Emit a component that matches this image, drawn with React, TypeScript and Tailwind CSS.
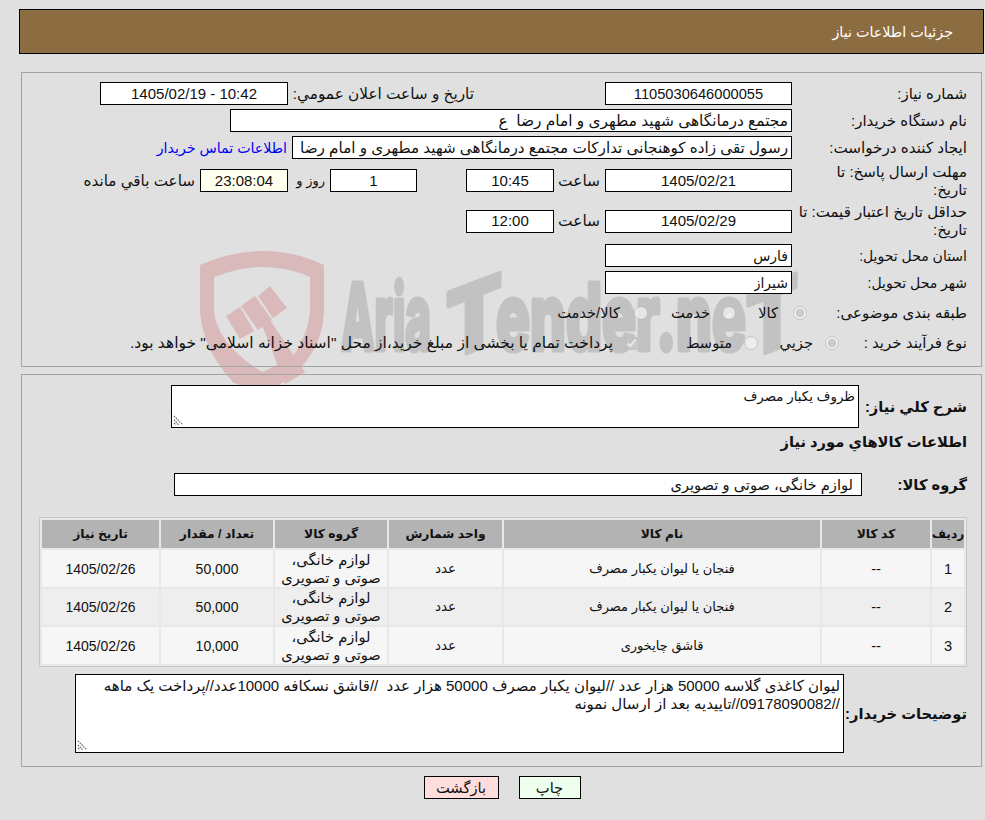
import React from 'react';

const items = [
  { id: '1', name: 'فنجان يا ليوان يکبار مصرف', qty: '50,000', bg: 'bg-[#f6f6f6]', h: 'h-[37px]' },
  { id: '2', name: 'فنجان يا ليوان يکبار مصرف', qty: '50,000', bg: 'bg-[#eeeeee]', h: 'h-[36px]' },
  { id: '3', name: 'قاشق چايخوری', qty: '10,000', bg: 'bg-[#f6f6f6]', h: 'h-[37px]' },
];

function Box({ className = '', children }: { className?: string; children?: React.ReactNode }) {
  return (
    <div className={`flex h-[23px] shrink-0 items-center border border-black bg-white px-[3px] ${className}`}>
      <span className="truncate">{children}</span>
    </div>
  );
}

function Grip() {
  return (
    <svg className="absolute bottom-[1px] left-[1px]" width="11" height="11" viewBox="0 0 11 11">
      <path d="M1 1 L10 10 M1 5 L6 10 M1 8 L3 10" stroke="#666" strokeWidth="1.2" strokeDasharray="1.5 1" fill="none" />
    </svg>
  );
}

function Watermark() {
  return (
    <svg dir="ltr" className="absolute left-[190px] top-[240px]" width="630" height="190" viewBox="190 240 630 190">
      <g fill="#d9b9b9">
        <path
          fillRule="evenodd"
          d="M200 265 Q232 251 262 251 Q295 251 324 265 L324 312 Q322 350 293 375 L275 388 L233 382 Q203 350 200 312 Z M214 277 Q240 267 262 267 Q288 267 310 277 L310 312 Q308 335 292 358 L262 372 Q218 345 214 312 Z"
        />
        <path d="M226 316 L240 307 L254 331 L240 339 Z" />
        <path d="M241 306 L255 296 L272 320 L258 330 Z" />
        <path d="M258 296 L270 286 L287 308 L273 318 Z" />
        <path d="M262 325 L270 320 L305 372 L285 384 Z" />
        <path d="M248 362 L232 382 L258 392 Z" />
      </g>
      <g
        fill="#c2c2c2"
        stroke="#c2c2c2"
        strokeWidth="5"
        strokeLinejoin="round"
        fontFamily="Inter, sans-serif"
        fontWeight="800"
        style={{ direction: 'ltr' }}
      >
        <text x="341" y="350" fontSize="92" textLength="90" lengthAdjust="spacingAndGlyphs">Aria</text>
        <text x="446" y="350" fontSize="92" textLength="56" lengthAdjust="spacingAndGlyphs" transform="translate(474 350) skewY(-21) translate(-474 -350)">T</text>
        <text x="496" y="350" fontSize="92" textLength="250" lengthAdjust="spacingAndGlyphs">ender.ne</text>
        <text x="746" y="350" fontSize="92" textLength="52" lengthAdjust="spacingAndGlyphs" transform="translate(772 350) skewY(-21) translate(-772 -350)">T</text>
      </g>
    </svg>
  );
}

export default function App() {
  return (
    <div
      dir="rtl"
      className="relative h-[820px] overflow-hidden bg-[#e0e0e0] text-[14.67px] leading-[18px] text-[#111] [font-family:'Liberation_Sans','DejaVu_Sans',sans-serif]"
    >
      <Watermark />

      <div className="relative flex flex-col">
        {/* header */}
        <div className="ml-[19px] mr-px mt-[9px] flex h-[45px] items-center border border-black bg-[#8c6d42] pr-[30px] text-[14.3px] text-white">
          جزئيات اطلاعات نياز
        </div>

        {/* top panel */}
        <div className="ml-[21px] mr-[3px] mt-[18px] flex flex-col gap-1 border border-[#a3a3a3] pb-[12px] pr-[14px] pt-[9px]">
          <div className="flex h-[23px] items-center">
            <div className="w-[175px] shrink-0 text-[15px]">شماره نياز:</div>
            <Box className="w-[187px] justify-center">1105030646000055</Box>
            <div className="w-[131px] shrink-0" />
            <div className="w-[186px] shrink-0 text-[15.3px]">تاريخ و ساعت اعلان عمومي:</div>
            <Box className="w-[188px] justify-center text-[15px]">10:42 - 1405/02/19</Box>
          </div>
          <div className="flex h-[23px] items-center">
            <div className="w-[175px] shrink-0 text-[15px]">نام دستگاه خريدار:</div>
            <Box className="w-[562px] text-[15.4px]">مجتمع درمانگاهی شهيد مطهری و امام رضا&nbsp; ع</Box>
          </div>
          <div className="flex h-[23px] items-center">
            <div className="w-[175px] shrink-0 text-[15.2px]">ايجاد کننده درخواست:</div>
            <Box className="w-[500px] text-[15.2px]">رسول تقی زاده کوهنجانی تدارکات مجتمع درمانگاهی شهيد مطهری و امام رضا</Box>
            <a className="mr-[5px] text-[14.2px] text-[#0000ee]">اطلاعات تماس خريدار</a>
          </div>
          <div className="flex h-[35px] items-center">
            <div className="w-[175px] shrink-0 text-[15px]">
              مهلت ارسال پاسخ: تا
              <br />
              تاريخ:
            </div>
            <Box className="w-[187px] justify-center text-[15px]">1405/02/21</Box>
            <div className="w-[51px] shrink-0 pr-[5px] text-[15.4px]">ساعت</div>
            <Box className="w-[88px] justify-center text-[15px]">10:45</Box>
            <div className="w-[49px] shrink-0" />
            <Box className="w-[87px] justify-center text-[15px]">1</Box>
            <div className="w-[42px] shrink-0 pr-[5px] text-[13px]">روز و</div>
            <Box className="w-[88px] justify-center !bg-[#ffffee] text-[15px]">23:08:04</Box>
            <div className="shrink-0 pr-[5px] text-[15.2px]">ساعت باقي مانده</div>
          </div>
          <div className="flex h-[38px] items-center">
            <div className="w-[175px] shrink-0 text-[15px]">
              حداقل تاريخ اعتبار قيمت: تا
              <br />
              تاريخ:
            </div>
            <Box className="w-[187px] justify-center text-[15px]">1405/02/29</Box>
            <div className="w-[51px] shrink-0 pr-[5px] text-[15.4px]">ساعت</div>
            <Box className="w-[88px] justify-center text-[15px]">12:00</Box>
          </div>
          <div className="flex h-[23px] items-center">
            <div className="w-[175px] shrink-0 text-[14px]">استان محل تحويل:</div>
            <Box className="w-[187px] text-[14px]">فارس</Box>
          </div>
          <div className="flex h-[23px] items-center">
            <div className="w-[175px] shrink-0 text-[14px]">شهر محل تحويل:</div>
            <Box className="w-[187px] text-[14px]">شيراز</Box>
          </div>
          <div className="flex h-[30px] items-center">
            <div className="w-[160px] shrink-0 text-[15px]">طبقه بندی موضوعی:</div>
            <label className="flex w-[71px] items-center gap-[15px]">
              <input className="h-[14px] w-[14px]" type="radio" name="kind" checked disabled readOnly />
              کالا
            </label>
            <label className="flex w-[88px] items-center gap-[12px]">
              <input className="h-[14px] w-[14px]" type="radio" name="kind" disabled />
              خدمت
            </label>
            <label className="flex items-center gap-[14px]">
              <input className="h-[14px] w-[14px]" type="radio" name="kind" disabled />
              کالا/خدمت
            </label>
          </div>
          <div className="flex h-[22px] items-center">
            <div className="w-[128px] shrink-0 text-[15px]">نوع فرآيند خريد :</div>
            <label className="flex w-[81px] items-center gap-[12px]">
              <input className="h-[14px] w-[14px]" type="radio" name="proc" checked disabled readOnly />
              جزيي
            </label>
            <label className="flex w-[120px] items-center gap-[12px]">
              <input className="h-[14px] w-[14px]" type="radio" name="proc" disabled />
              متوسط
            </label>
            <label className="flex items-center gap-[12px] text-[15.5px]">
              <input type="checkbox" checked disabled readOnly />
              پرداخت تمام يا بخشی از مبلغ خريد،از محل "اسناد خزانه اسلامی" خواهد بود.
            </label>
          </div>
        </div>

        {/* bottom panel */}
        <div className="ml-[21px] mr-[3px] mt-[7px] flex flex-col border border-[#a3a3a3] pb-[13px] pr-[14px] pt-[10px]">
          <div className="flex items-center">
            <div className="w-[108px] shrink-0 whitespace-nowrap text-[14.7px] font-bold">شرح کلي نياز:</div>
            <div className="relative h-[43px] w-[688px] border border-black bg-white px-[3px] py-[2px] text-[13.4px]">
              ظروف يکبار مصرف
              <Grip />
            </div>
          </div>
          <div className="mt-[5px] h-[20px] text-[14.7px] font-bold">اطلاعات کالاهاي مورد نياز</div>
          <div className="mt-[20px] flex items-center">
            <div className="w-[105px] shrink-0 text-[14.7px] font-bold">گروه کالا:</div>
            <Box className="w-[688px] pr-[8px]">لوازم خانگی، صوتی و تصويری</Box>
          </div>

          <div className="mt-[21px] grid w-[928px] grid-cols-[32px_108px_316px_113px_112px_112px_117px] gap-[2px] border border-[#c6c6c6] bg-[#e8e8e8] p-[2px] text-center">
            {['رديف', 'کد کالا', 'نام کالا', 'واحد شمارش', 'گروه کالا', 'تعداد / مقدار', 'تاريخ نياز'].map((title) => (
              <div key={title} className="flex h-[28px] items-center justify-center bg-[#b3b3b3] text-[12.3px] font-bold">
                {title}
              </div>
            ))}
            {items.map((item) => (
              <React.Fragment key={item.id}>
                <div className={`flex items-center justify-center ${item.h} ${item.bg}`}>{item.id}</div>
                <div className={`flex items-center justify-center ${item.bg}`}>--</div>
                <div className={`flex items-center justify-center text-[13px] ${item.bg}`}>{item.name}</div>
                <div className={`flex items-center justify-center text-[13.5px] ${item.bg}`}>عدد</div>
                <div className={`flex items-center justify-center ${item.bg}`}>
                  لوازم خانگی،
                  <br />
                  صوتی و تصويری
                </div>
                <div className={`flex items-center justify-center text-[14px] ${item.bg}`}>{item.qty}</div>
                <div className={`flex items-center justify-center text-[14px] ${item.bg}`}>1405/02/26</div>
              </React.Fragment>
            ))}
          </div>

          <div className="mt-[7px] flex items-center">
            <div className="w-[123px] shrink-0 whitespace-nowrap text-[14.7px] font-bold">توضيحات خريدار:</div>
            <div className="relative h-[79px] w-[769px] border border-black bg-white px-[3px] py-[2px] text-[15px]">
              ليوان کاغذی گلاسه 50000 هزار عدد //ليوان يکبار مصرف 50000 هزار عدد&nbsp; //قاشق نسکافه 10000عدد//پرداخت يک ماهه
              //09178090082//تاييديه بعد از ارسال نمونه
              <Grip />
            </div>
          </div>
        </div>

        {/* actions */}
        <div className="mt-[9px] flex justify-center gap-[20px] pl-[19px]">
          <button className="h-[23px] w-[62px] border border-black bg-[#eeffee]">چاپ</button>
          <button className="h-[23px] w-[75px] border border-black bg-[#ffdddd]">بازگشت</button>
        </div>
      </div>
    </div>
  );
}
